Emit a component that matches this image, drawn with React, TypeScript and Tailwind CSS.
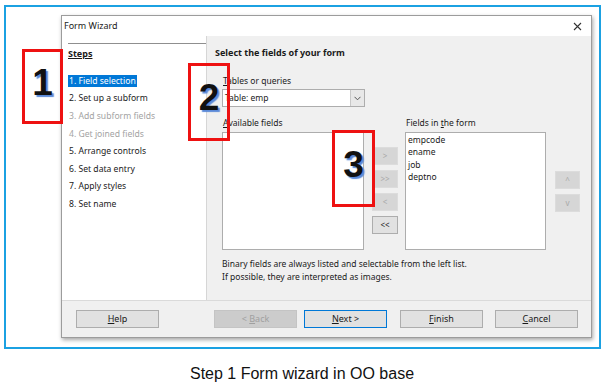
import React from 'react';

const steps = [
    { label: '1. Field selection', state: 'active' },
    { label: '2. Set up a subform', state: 'normal' },
    { label: '3. Add subform fields', state: 'disabled' },
    { label: '4. Get joined fields', state: 'disabled' },
    { label: '5. Arrange controls', state: 'normal' },
    { label: '6. Set data entry', state: 'normal' },
    { label: '7. Apply styles', state: 'normal' },
    { label: '8. Set name', state: 'normal' },
];

const SmallButton = ({ label, enabled = false }: { label: string; enabled?: boolean }) => (
    <div
        className={
            enabled
                ? 'flex h-[18px] w-full items-center justify-center border border-[#adadad] bg-[#e1e1e1] text-[8px] text-[#222]'
                : 'flex h-[18px] w-full items-center justify-center border border-[#dcdcdc] bg-[#d6d6d6] text-[8px] text-[#a8a8a8]'
        }
    >
        {label}
    </div>
);

const FooterButton = ({
    children,
    variant = 'normal',
}: {
    children: React.ReactNode;
    variant?: 'normal' | 'disabled' | 'default';
}) => {
    const look =
        variant === 'disabled'
            ? 'border-[#c4c4c4] bg-[#cccccc] text-[#a0a0a0]'
            : variant === 'default'
            ? 'border-[#0078d7] bg-[#e1e1e1] text-[#1a1a1a]'
            : 'border-[#adadad] bg-[#e1e1e1] text-[#1a1a1a]';
    return (
        <div className={`flex h-[18px] w-[83px] items-center justify-center whitespace-pre border text-[9px] ${look}`}>
            {children}
        </div>
    );
};

const Marker = ({ n, className }: { n: string; className: string }) => (
    <div
        className={`absolute flex items-center justify-center border-[3px] border-[#ee1111] pb-[9px] font-['Liberation_Sans',Arial,sans-serif] text-[37px] font-bold leading-none text-[#111] [text-shadow:2px_2px_1px_#5b8ad8] ${className}`}
    >
        {n}
    </div>
);

export default function App() {
    return (
        <div className="relative h-[392px] w-[604px] overflow-hidden bg-white">
            {/* blue frame round the screenshot */}
            <div className="ml-[4px] mt-[5px] h-[344px] w-[597px] border-2 border-[#1ba1e2] pl-[55px] pt-[8px]">
                <div className="flex h-[323px] w-[531px] flex-col border border-[#9c9c9c] bg-[#f0f0f0] font-['Noto_Sans',sans-serif] text-[#1a1a1a] shadow-[1px_2px_4px_rgba(0,0,0,0.35)]">
                    {/* title bar */}
                    <div className="flex h-[20px] items-center justify-between bg-white pl-[2px] pr-[9px]">
                        <span className="text-[9px]">Form Wizard</span>
                        <svg width="9" height="9" viewBox="0 0 9 9" className="text-[#333]">
                            <path d="M1 1 L8 8 M8 1 L1 8" stroke="currentColor" strokeWidth="1.1" />
                        </svg>
                    </div>

                    {/* body */}
                    <div className="flex h-[264px]">
                        {/* steps */}
                        <div className="w-[145px] border-r border-[#d6d6d6] bg-white pl-[6px] pt-[7px]">
                            <div className="border-t border-[#8f8f8f] pt-[4px]">
                                <div className="h-[12px] text-[9px] font-bold leading-[12px] underline">Steps</div>
                                <div className="mt-[12px] flex flex-col">
                                    {steps.map((s) => (
                                        <div key={s.label} className="flex h-[17.6px] items-center">
                                            <span
                                                className={
                                                    s.state === 'active'
                                                        ? 'bg-[#0078d7] px-[1px] text-[8.6px] leading-[12px] text-white'
                                                        : s.state === 'disabled'
                                                        ? 'px-[1px] text-[8.6px] leading-[12px] text-[#a3a3a3]'
                                                        : 'px-[1px] text-[8.6px] leading-[12px] text-[#1a1a1a]'
                                                }
                                            >
                                                {s.label}
                                            </span>
                                        </div>
                                    ))}
                                </div>
                            </div>
                        </div>

                        {/* field selection page */}
                        <div className="flex flex-1 flex-col pl-[8px] pt-[11px]">
                            <div className="h-[12px] text-[9px] font-bold leading-[12px]">Select the fields of your form</div>
                            <div className="ml-[8px] mt-[16px] h-[12px] text-[8.5px] leading-[12px]">
                                <span className="underline">T</span>ables or queries
                            </div>
                            <div className="ml-[7px] mt-[2px] flex h-[18px] w-[143px] items-stretch border border-[#adadad] bg-white">
                                <div className="flex flex-1 items-center pl-[2px] text-[8.5px]">Table: emp</div>
                                <div className="flex w-[14px] items-center justify-center border-l border-[#c8c8c8] bg-[#e8e8e8]">
                                    <svg width="7" height="5" viewBox="0 0 7 5">
                                        <path d="M0.5 0.8 L3.5 3.8 L6.5 0.8" stroke="#555" strokeWidth="1" fill="none" />
                                    </svg>
                                </div>
                            </div>

                            <div className="ml-[7px] mt-[10px] flex">
                                <div className="flex w-[142px] flex-col">
                                    <div className="h-[12px] pl-[1px] text-[8.5px] leading-[12px]">
                                        <span className="underline">A</span>vailable fields
                                    </div>
                                    <div className="mt-[3px] h-[118px] border border-[#adadad] bg-white" />
                                </div>

                                <div className="ml-[8px] flex w-[26px] flex-col gap-[5px] pt-[30px]">
                                    <SmallButton label=">" />
                                    <SmallButton label=">>" />
                                    <SmallButton label="<" />
                                    <SmallButton label="<<" enabled />
                                </div>

                                <div className="ml-[7px] flex w-[141px] flex-col">
                                    <div className="h-[12px] pl-[1px] text-[8.5px] leading-[12px]">
                                        Fields in <span className="underline">t</span>he form
                                    </div>
                                    <div className="mt-[3px] flex h-[118px] flex-col border border-[#adadad] bg-white pl-[2px] pt-[1px] text-[8.5px] leading-[12.3px]">
                                        <span>empcode</span>
                                        <span>ename</span>
                                        <span>job</span>
                                        <span>deptno</span>
                                    </div>
                                </div>

                                <div className="ml-[9px] flex w-[25px] flex-col gap-[5px] pt-[54px]">
                                    <SmallButton label="^" />
                                    <SmallButton label="v" />
                                </div>
                            </div>

                            <div className="ml-[7px] mt-[7px] text-[8.5px] leading-[13px]">
                                <div>Binary fields are always listed and selectable from the left list.</div>
                                <div>If possible, they are interpreted as images.</div>
                            </div>
                        </div>
                    </div>

                    {/* footer */}
                    <div className="flex flex-1 items-start border-t border-[#dadada] pl-[14px] pt-[9px]">
                        <FooterButton>
                            <span className="underline">H</span>elp
                        </FooterButton>
                        <div className="ml-[55px]">
                            <FooterButton variant="disabled">
                                {'< '}
                                <span className="underline">B</span>ack
                            </FooterButton>
                        </div>
                        <div className="ml-[7px]">
                            <FooterButton variant="default">
                                <span className="underline">N</span>
                                {'ext >'}
                            </FooterButton>
                        </div>
                        <div className="ml-[13px]">
                            <FooterButton>
                                <span className="underline">F</span>inish
                            </FooterButton>
                        </div>
                        <div className="ml-[12px]">
                            <FooterButton>
                                <span className="underline">C</span>ancel
                            </FooterButton>
                        </div>
                    </div>
                </div>
            </div>

            <div className="mt-[16px] text-center font-['Liberation_Sans',Arial,sans-serif] text-[16px] leading-[18px] text-[#111]">
                Step 1 Form wizard in OO base
            </div>

            {/* red annotation boxes */}
            <Marker n="1" className="left-[22px] top-[49px] h-[75px] w-[41px]" />
            <Marker n="2" className="left-[188px] top-[63px] h-[78px] w-[42px]" />
            <Marker n="3" className="left-[332px] top-[130px] h-[77px] w-[43px]" />
        </div>
    );
}
